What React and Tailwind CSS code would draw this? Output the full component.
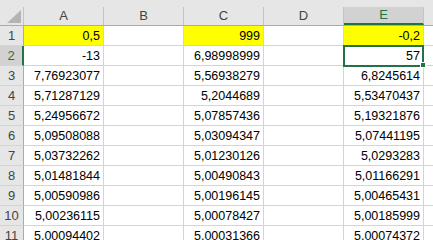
import React from "react";

const COLS = ["A", "B", "C", "D", "E"];

// values by row, columns A..E (B and D empty)
const DATA = [
  ["0,5", "", "999", "", "-0,2"],
  ["-13", "", "6,98998999", "", "57"],
  ["7,76923077", "", "5,56938279", "", "6,8245614"],
  ["5,71287129", "", "5,2044689", "", "5,53470437"],
  ["5,24956672", "", "5,07857436", "", "5,19321876"],
  ["5,09508088", "", "5,03094347", "", "5,07441195"],
  ["5,03732262", "", "5,01230126", "", "5,0293283"],
  ["5,01481844", "", "5,00490843", "", "5,01166291"],
  ["5,00590986", "", "5,00196145", "", "5,00465431"],
  ["5,00236115", "", "5,00078427", "", "5,00185999"],
  ["5,00094402", "", "5,00031366", "", "5,00074372"],
];

function HeaderRow() {
  return (
    <div className="flex h-[26px] bg-[#e6e6e6] border-b border-[#ababab]">
      {/* corner with the select-all triangle */}
      <div className="relative w-[24px] shrink-0 pt-[7px]">
        <div className="h-full border-r border-[#c4c4c4]" />
        <svg className="absolute left-[7px] top-[10px]" width="14" height="13" viewBox="0 0 14 13">
          <polygon points="14,0 14,13 0,13" fill="#b4b4b4" />
        </svg>
      </div>
      {COLS.map((c) => {
        const sel = c === "E";
        return (
          <div key={c} className="w-[80px] shrink-0 pt-[7px]">
            <div
              className={
                "h-full flex items-center justify-center border-r border-[#c4c4c4] text-[13px] " +
                (sel
                  ? "bg-[#d2d2d2] text-[#217346] border-b-2 border-b-[#217346]"
                  : "text-[#444444]")
              }
            >
              {c}
            </div>
          </div>
        );
      })}
      <div className="flex-1" />
    </div>
  );
}

function DataRow({ n, values }) {
  const active = n === 2;
  return (
    <div className="flex h-[20px]">
      <div
        className={
          "w-[24px] shrink-0 flex items-center justify-center text-[13px] border-b border-[#d4d4d4] " +
          (active
            ? "bg-[#d2d2d2] text-[#217346] border-r-2 border-r-[#217346]"
            : "bg-[#e6e6e6] text-[#444444] border-r border-r-[#ababab]")
        }
      >
        {n}
      </div>
      {values.map((v, i) => {
        const yellow = n === 1 && v !== "";
        return (
          <div
            key={i}
            className={
              "w-[80px] shrink-0 flex items-center justify-end pr-[3px] pt-[1px] border-r border-b border-[#d4d4d4] " +
              (yellow ? "bg-[#ffff00]" : "bg-white")
            }
          >
            {v}
          </div>
        );
      })}
      <div className="flex-1 border-b border-[#d4d4d4] bg-white" />
    </div>
  );
}

export default function App() {
  return (
    <div
      className="relative w-[433px] h-[240px] overflow-hidden bg-white text-[12.5px] text-black"
      style={{ fontFamily: '"Liberation Sans", Arial, sans-serif' }}
    >
      <HeaderRow />
      {DATA.map((row, i) => (
        <DataRow key={i} n={i + 1} values={row} />
      ))}
      {/* active cell E2 */}
      <div className="absolute left-[343px] top-[45px] w-[81px] h-[22px] border-2 border-[#217346]" />
      <div className="absolute left-[420px] top-[62px] w-[6px] h-[6px] bg-[#217346] border border-white" />
    </div>
  );
}
